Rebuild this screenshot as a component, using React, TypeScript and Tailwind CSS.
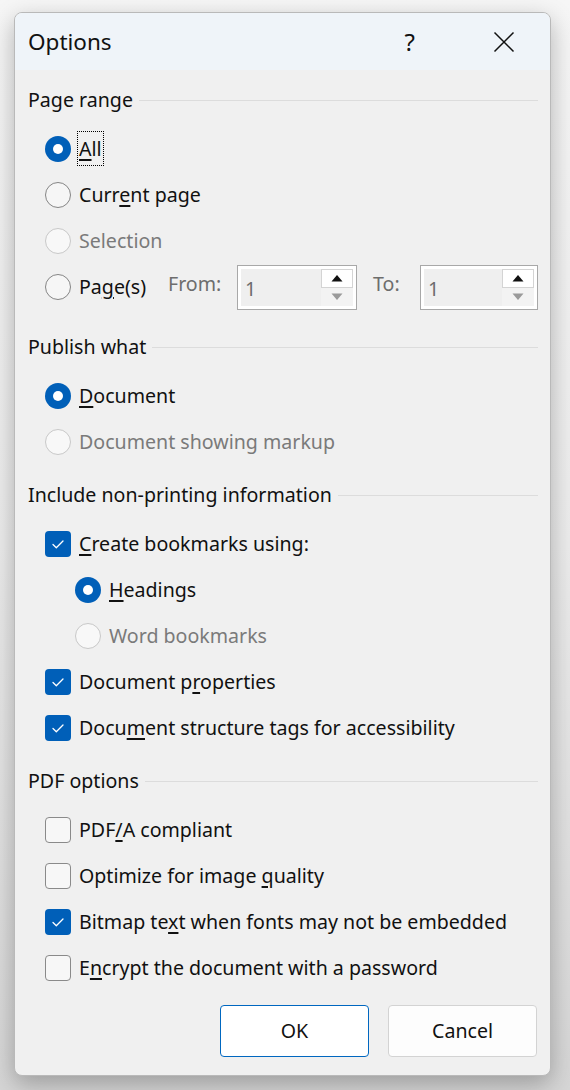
import React from "react";

const FONT = { fontFamily: '"Noto Sans", "Open Sans", sans-serif' };

function Radio({ state }: { state: "on" | "off" | "disabled" }) {
  if (state === "on")
    return (
      <span className="flex h-[26px] w-[26px] shrink-0 items-center justify-center rounded-full bg-[#005fb8]">
        <span className="h-[10px] w-[10px] rounded-full bg-white" />
      </span>
    );
  if (state === "off")
    return <span className="h-[26px] w-[26px] shrink-0 rounded-full border-[1.5px] border-[#858585] bg-[#f6f6f6]" />;
  return <span className="h-[26px] w-[26px] shrink-0 rounded-full border-[1.5px] border-[#c8c8c8] bg-[#f8f8f8]" />;
}

function Check({ on }: { on: boolean }) {
  if (on)
    return (
      <span className="flex h-[26px] w-[26px] shrink-0 items-center justify-center rounded-[4px] bg-[#005fb8]">
        <svg width="26" height="26" viewBox="0 0 26 26">
          <path d="M8 13.5 L11.3 16.8 L18 10" fill="none" stroke="white" strokeWidth="1.3" strokeLinecap="round" strokeLinejoin="round" />
        </svg>
      </span>
    );
  return <span className="h-[26px] w-[26px] shrink-0 rounded-[4px] border border-[#8a8a8a] bg-[#f7f7f7]" />;
}

function U({ children }: { children: React.ReactNode }) {
  return <span className="underline decoration-[1.5px] underline-offset-[3px]">{children}</span>;
}

function Row({
  control,
  children,
  disabled,
  indent,
}: {
  control: React.ReactNode;
  children: React.ReactNode;
  disabled?: boolean;
  indent?: boolean;
}) {
  return (
    <div className={`flex h-[46px] items-center gap-[8px] ${indent ? "pl-[47px]" : "pl-[17px]"}`}>
      {control}
      <span className={`whitespace-nowrap text-[19.6px] leading-none ${disabled ? "text-[#7a7a7a]" : "text-[#111]"}`}>{children}</span>
    </div>
  );
}

function Heading({ children }: { children: React.ReactNode }) {
  return (
    <div className="flex h-[26px] items-center gap-[6px]">
      <span className="whitespace-nowrap text-[19.6px] leading-none text-[#111]">{children}</span>
      <span className="mt-[1px] h-px flex-1 bg-[#dcdcdc]" />
    </div>
  );
}

function Spin({ width }: { width: string }) {
  return (
    <div className={`flex h-[45px] ${width} shrink-0 items-stretch border border-[#a8a8a8] bg-white p-[3px]`}>
      <div className="flex flex-1 items-center bg-[#efefef] pl-[4px] pt-[4px] text-[19.6px] leading-none text-[#6d6d6d]">1</div>
      <div className="flex w-[32px] flex-col">
        <div className="flex flex-1 items-center justify-center border border-[#d4d4d4] bg-white">
          <svg width="12" height="8" viewBox="0 0 12 8">
            <path d="M0.5 7.5 L6 1 L11.5 7.5 Z" fill="#111" />
          </svg>
        </div>
        <div className="flex flex-1 items-center justify-center bg-[#f3f3f3]">
          <svg width="12" height="8" viewBox="0 0 12 8">
            <path d="M0.5 0.5 L6 7 L11.5 0.5 Z" fill="#9a9a9a" />
          </svg>
        </div>
      </div>
    </div>
  );
}

export default function App() {
  return (
    <div
      className="h-[1090px] w-[570px] overflow-hidden bg-gradient-to-b from-[#f6f6f6] via-[#ececec] to-[#d6d6d6] pl-[14px] pt-[12px]"
      style={FONT}
    >
      <div className="flex h-[1064px] w-[537px] flex-col overflow-hidden rounded-[8px] border border-[#b9b9b9] bg-[#f0f0f0] shadow-[0_8px_24px_rgba(0,0,0,0.28)]">
        {/* title bar */}
        <div className="flex h-[57px] items-center bg-[#eff4f9] pl-[13px]">
          <span className="flex-1 pt-[2px] text-[22.5px] leading-none text-[#111]">Options</span>
          <span className="mr-[78px] text-[24px] leading-none text-[#111]">?</span>
          <svg className="mr-[35px]" width="22" height="22" viewBox="0 0 22 22">
            <path d="M1.5 1.5 L20.5 20.5 M20.5 1.5 L1.5 20.5" stroke="#111" strokeWidth="1.5" fill="none" />
          </svg>
        </div>

        {/* body */}
        <div className="flex flex-1 flex-col pl-[13px] pr-[12px] pt-[17px]">
          <Heading>Page range</Heading>
          <div className="mt-[13px] flex flex-col">
            <Row control={<Radio state="on" />}>
              <span className="-m-[2px] border border-dotted border-black px-[1px] py-[3px]">
                <U>A</U>ll
              </span>
            </Row>
            <Row control={<Radio state="off" />}>
              Curr<U>e</U>nt page
            </Row>
            <Row control={<Radio state="disabled" />} disabled>
              Selection
            </Row>
            <div className="flex h-[46px] items-center pl-[17px]">
              <Radio state="off" />
              <span className="ml-[8px] w-[89px] shrink-0 whitespace-nowrap text-[19.6px] leading-none text-[#111]">
                Pa<U>g</U>e(s)
              </span>
              <span className="w-[69px] shrink-0 pb-[6px] text-[19.6px] leading-none text-[#6d6d6d]">From:</span>
              <Spin width="w-[120px]" />
              <span className="ml-[16px] w-[47px] shrink-0 pb-[6px] text-[19.6px] leading-none text-[#6d6d6d]">To:</span>
              <Spin width="w-[118px]" />
            </div>
          </div>

          <div className="mt-[24px]">
            <Heading>Publish what</Heading>
          </div>
          <div className="mt-[13px] flex flex-col">
            <Row control={<Radio state="on" />}>
              <U>D</U>ocument
            </Row>
            <Row control={<Radio state="disabled" />} disabled>
              Document showing markup
            </Row>
          </div>

          <div className="mt-[17px]">
            <Heading>Include non-printing information</Heading>
          </div>
          <div className="mt-[13px] flex flex-col">
            <Row control={<Check on />}>
              <U>C</U>reate bookmarks using:
            </Row>
            <Row control={<Radio state="on" />} indent>
              <U>H</U>eadings
            </Row>
            <Row control={<Radio state="disabled" />} indent disabled>
              Word bookmarks
            </Row>
            <Row control={<Check on />}>
              Document p<U>r</U>operties
            </Row>
            <Row control={<Check on />}>
              Docu<U>m</U>ent structure tags for accessibility
            </Row>
          </div>

          <div className="mt-[17px]">
            <Heading>PDF options</Heading>
          </div>
          <div className="mt-[13px] flex flex-col">
            <Row control={<Check on={false} />}>
              PDF<U>/</U>A compliant
            </Row>
            <Row control={<Check on={false} />}>
              Optimize for image <U>q</U>uality
            </Row>
            <Row control={<Check on />}>
              Bitmap te<U>x</U>t when fonts may not be embedded
            </Row>
            <Row control={<Check on={false} />}>
              E<U>n</U>crypt the document with a password
            </Row>
          </div>

          <div className="mt-[14px] flex justify-end gap-[19px] pr-[1px]">
            <button className="flex h-[52px] w-[149px] items-center justify-center rounded-[4px] border border-[#0067c0] bg-white text-[19.6px] leading-none text-[#111]">
              OK
            </button>
            <button className="flex h-[52px] w-[149px] items-center justify-center rounded-[4px] border border-[#d3d3d3] bg-[#fdfdfd] text-[19.6px] leading-none text-[#111]">
              Cancel
            </button>
          </div>
        </div>
      </div>
    </div>
  );
}
